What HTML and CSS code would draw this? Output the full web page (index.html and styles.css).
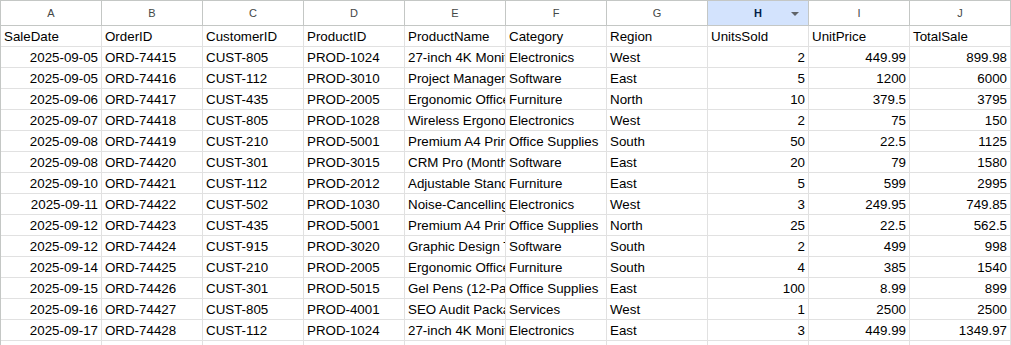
FILE: index.html
```html
<!DOCTYPE html>
<html>
<head>
<meta charset="utf-8">
<link rel="stylesheet" href="styles.css">
</head>
<body>
<div class="sheet">
  <div class="ch">A</div><div class="ch">B</div><div class="ch">C</div><div class="ch">D</div><div class="ch">E</div><div class="ch">F</div><div class="ch">G</div>
  <div class="ch sel">H<span class="dd"></span></div><div class="ch">I</div><div class="ch">J</div>

  <div class="c">SaleDate</div><div class="c">OrderID</div><div class="c">CustomerID</div><div class="c">ProductID</div><div class="c">ProductName</div><div class="c">Category</div><div class="c">Region</div><div class="c">UnitsSold</div><div class="c">UnitPrice</div><div class="c">TotalSale</div>

  <div class="c n">2025-09-05</div><div class="c">ORD-74415</div><div class="c">CUST-805</div><div class="c">PROD-1024</div><div class="c">27-inch 4K Monitor</div><div class="c">Electronics</div><div class="c">West</div><div class="c n">2</div><div class="c n">449.99</div><div class="c n">899.98</div>
  <div class="c n">2025-09-05</div><div class="c">ORD-74416</div><div class="c">CUST-112</div><div class="c">PROD-3010</div><div class="c">Project Management Suite</div><div class="c">Software</div><div class="c">East</div><div class="c n">5</div><div class="c n">1200</div><div class="c n">6000</div>
  <div class="c n">2025-09-06</div><div class="c">ORD-74417</div><div class="c">CUST-435</div><div class="c">PROD-2005</div><div class="c">Ergonomic Office Chair</div><div class="c">Furniture</div><div class="c">North</div><div class="c n">10</div><div class="c n">379.5</div><div class="c n">3795</div>
  <div class="c n">2025-09-07</div><div class="c">ORD-74418</div><div class="c">CUST-805</div><div class="c">PROD-1028</div><div class="c">Wireless Ergonomic Mouse</div><div class="c">Electronics</div><div class="c">West</div><div class="c n">2</div><div class="c n">75</div><div class="c n">150</div>
  <div class="c n">2025-09-08</div><div class="c">ORD-74419</div><div class="c">CUST-210</div><div class="c">PROD-5001</div><div class="c">Premium A4 Printer Paper</div><div class="c">Office Supplies</div><div class="c">South</div><div class="c n">50</div><div class="c n">22.5</div><div class="c n">1125</div>
  <div class="c n">2025-09-08</div><div class="c">ORD-74420</div><div class="c">CUST-301</div><div class="c">PROD-3015</div><div class="c">CRM Pro (Monthly)</div><div class="c">Software</div><div class="c">East</div><div class="c n">20</div><div class="c n">79</div><div class="c n">1580</div>
  <div class="c n">2025-09-10</div><div class="c">ORD-74421</div><div class="c">CUST-112</div><div class="c">PROD-2012</div><div class="c">Adjustable Standing Desk</div><div class="c">Furniture</div><div class="c">East</div><div class="c n">5</div><div class="c n">599</div><div class="c n">2995</div>
  <div class="c n">2025-09-11</div><div class="c">ORD-74422</div><div class="c">CUST-502</div><div class="c">PROD-1030</div><div class="c">Noise-Cancelling Headphones</div><div class="c">Electronics</div><div class="c">West</div><div class="c n">3</div><div class="c n">249.95</div><div class="c n">749.85</div>
  <div class="c n">2025-09-12</div><div class="c">ORD-74423</div><div class="c">CUST-435</div><div class="c">PROD-5001</div><div class="c">Premium A4 Printer Paper</div><div class="c">Office Supplies</div><div class="c">North</div><div class="c n">25</div><div class="c n">22.5</div><div class="c n">562.5</div>
  <div class="c n">2025-09-12</div><div class="c">ORD-74424</div><div class="c">CUST-915</div><div class="c">PROD-3020</div><div class="c">Graphic Design Tool</div><div class="c">Software</div><div class="c">South</div><div class="c n">2</div><div class="c n">499</div><div class="c n">998</div>
  <div class="c n">2025-09-14</div><div class="c">ORD-74425</div><div class="c">CUST-210</div><div class="c">PROD-2005</div><div class="c">Ergonomic Office Chair</div><div class="c">Furniture</div><div class="c">South</div><div class="c n">4</div><div class="c n">385</div><div class="c n">1540</div>
  <div class="c n">2025-09-15</div><div class="c">ORD-74426</div><div class="c">CUST-301</div><div class="c">PROD-5015</div><div class="c">Gel Pens (12-Pack)</div><div class="c">Office Supplies</div><div class="c">East</div><div class="c n">100</div><div class="c n">8.99</div><div class="c n">899</div>
  <div class="c n">2025-09-16</div><div class="c">ORD-74427</div><div class="c">CUST-805</div><div class="c">PROD-4001</div><div class="c">SEO Audit Package</div><div class="c">Services</div><div class="c">West</div><div class="c n">1</div><div class="c n">2500</div><div class="c n">2500</div>
  <div class="c n">2025-09-17</div><div class="c">ORD-74428</div><div class="c">CUST-112</div><div class="c">PROD-1024</div><div class="c">27-inch 4K Monitor</div><div class="c">Electronics</div><div class="c">East</div><div class="c n">3</div><div class="c n">449.99</div><div class="c n">1349.97</div>
  <div class="c"></div><div class="c"></div><div class="c"></div><div class="c"></div><div class="c"></div><div class="c"></div><div class="c"></div><div class="c"></div><div class="c"></div><div class="c"></div>
</div>
</body>
</html>
```
FILE: styles.css
```css
html, body {
  margin: 0;
  padding: 0;
  background: #ffffff;
}

.sheet {
  display: grid;
  grid-template-columns: repeat(10, 101px);
  grid-auto-rows: 21px;
  grid-template-rows: 25px;
  border-left: 1px solid #c4c7c5;
  border-top: 1px solid #c4c7c5;
  width: max-content;
  font-family: "Liberation Sans", Arial, sans-serif;
  color: #000000;
}

.ch {
  box-sizing: border-box;
  border-right: 1px solid #c4c7c5;
  border-bottom: 1px solid #c4c7c5;
  background: #ffffff;
  color: #444746;
  font-size: 11px;
  display: flex;
  align-items: center;
  justify-content: center;
  position: relative;
}

.ch.sel {
  background: #d3e3fd;
  color: #041e49;
  font-weight: bold;
}

.dd {
  position: absolute;
  right: 9px;
  top: 11px;
  width: 0;
  height: 0;
  border-left: 4px solid transparent;
  border-right: 4px solid transparent;
  border-top: 4px solid #5f6368;
}

.c {
  box-sizing: border-box;
  border-right: 1px solid #e1e1e1;
  border-bottom: 1px solid #e1e1e1;
  font-size: 13.33px;
  line-height: 16px;
  padding: 3px 3px 0 3px;
  white-space: nowrap;
  overflow: hidden;
}

.c.n {
  text-align: right;
}
```
